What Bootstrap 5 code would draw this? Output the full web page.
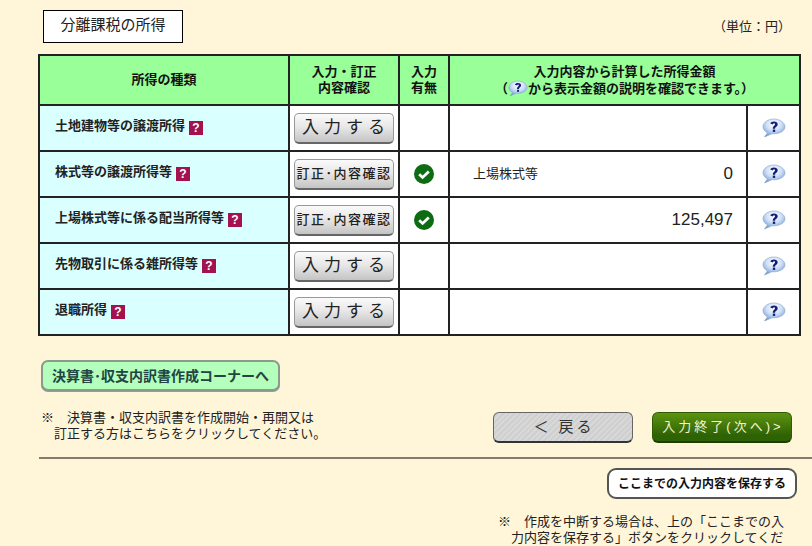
<!DOCTYPE html>
<html lang="ja">
<head>
<meta charset="utf-8">
<title>分離課税の所得</title>
<link href="https://cdn.jsdelivr.net/npm/bootstrap@5.3.0/dist/css/bootstrap.min.css" rel="stylesheet">
<style>
html,body{height:546px;overflow:hidden}
body{background:#fff5d9;color:#222;font-family:"Liberation Sans","Noto Sans CJK JP",sans-serif;font-size:13px;line-height:14px}
.pg{width:812px;height:546px;overflow:hidden}
.topbar{padding:10px 21px 11px 43px}
.ttl{width:140px;height:33px;border:1px solid #000;background:#fff;font-size:15px;color:#222;padding-bottom:3px}
.unit{font-size:13px;margin-bottom:0}
.tblwrap{padding:0 13px 0 38px}
.tx{table-layout:fixed;border-collapse:collapse;width:761px;margin:0;background:#fff}
.tx td,.tx th{border:2px solid #222;padding:0;vertical-align:middle;font-size:13px}
.tx th{background:#99ff99;text-align:center;height:50px;font-weight:700;line-height:16px;color:#111}
.tx tbody td{height:46px}
.tx td.nm{background:#d9ffff;font-weight:700;padding-left:15px;color:#222;padding-bottom:2px}
.tx td.ct{text-align:center}
.tx td.amt{padding:0 13px 0 23px;font-size:17px;color:#222}
.amt small{font-size:13px}
.qm{display:inline-flex;width:14px;height:14px;background:#a3124f;color:#fff;font:700 12px/14px "Liberation Sans",sans-serif;margin-left:4px;vertical-align:-2px;align-items:center;justify-content:center}
.gbtn{width:100px;height:31px;padding:0;border:1px solid #999;border-bottom:2px solid #666;border-radius:5px;background:linear-gradient(#fafafa,#e8e8e8 45%,#c4c4c4);color:#222;display:inline-flex;align-items:center;justify-content:center;white-space:nowrap}
.g1{font-size:17px;letter-spacing:5px;padding-left:4px}
.g2{font-size:13px;letter-spacing:1.5px;font-weight:500}
.lower{padding:24px 15px 0 41px}
.cornerbtn{width:239px;height:31px;border:2px solid #8a9a8f;border-radius:7px;background:#b3ffbb;font-weight:700;font-size:14px;color:#244;padding:0;box-shadow:0 1px 0 #999}
.note{margin:19px 0 0;font-size:13px;line-height:16px;width:300px;padding-left:13px;text-indent:-13px;white-space:nowrap}
.acts{padding-top:52px;gap:19px;margin-right:5px}
.back{width:140px;height:31px;border:1px solid #666;border-bottom:2px solid #333;border-radius:6px;background:repeating-linear-gradient(135deg,#d8d8d8 0 2px,#cfcfcf 2px 4px);font-size:15px;color:#333;letter-spacing:3px;padding:0 0 0 2px;white-space:nowrap}
.next{width:140px;height:31px;border:1px solid #2e5c05;border-bottom:2px solid #1f3d02;border-radius:6px;background:linear-gradient(#5d9410,#2f6205 80%);color:#eef5d8;font-size:13px;letter-spacing:3px;padding:0 0 0 2px;white-space:nowrap}
.rule{height:2px;background:#857a6c;margin:14px 0 0 39px;width:773px;border:0;opacity:1}
.savebtn{width:190px;height:31px;background:#fff;border:2px solid #555;border-radius:9px;font-weight:700;font-size:12px;color:#111;padding:0;margin:9px 15px 0 0}
.note2{width:288px;margin:15px 26px 0 auto;font-size:13px;line-height:16px;padding-left:13px;text-indent:-13px;color:#222}
</style>
</head>
<body>
<div class="pg">
  <div class="topbar d-flex justify-content-between align-items-center">
    <div class="ttl d-flex align-items-center justify-content-center">分離課税の所得</div>
    <div class="unit">（単位：円）</div>
  </div>
  <div class="tblwrap">
    <table class="tx">
      <colgroup><col style="width:250px"><col style="width:110px"><col style="width:50px"><col style="width:298px"><col style="width:53px"></colgroup>
      <thead>
        <tr><th>所得の種類</th><th>入力・訂正<br>内容確認</th><th>入力<br>有無</th>
          <th colspan="2">入力内容から計算した所得金額<br>（<svg width="20" height="17" viewBox="0 0 24 20" style="vertical-align:-4px"><use href="#bub"/></svg>から表示金額の説明を確認できます。）</th></tr>
      </thead>
      <tbody>
        <tr><td class="nm">土地建物等の譲渡所得<span class="qm">?</span></td><td class="ct"><button class="gbtn g1">入力する</button></td><td></td><td></td>
          <td class="ct"><svg width="24" height="20" viewBox="0 0 24 20"><use href="#bub"/></svg></td></tr>
        <tr><td class="nm">株式等の譲渡所得等<span class="qm">?</span></td><td class="ct"><button class="gbtn g2">訂正･内容確認</button></td>
          <td class="ct"><svg width="20" height="20" viewBox="0 0 20 20"><use href="#chk"/></svg></td>
          <td class="amt"><div class="d-flex justify-content-between align-items-center"><small>上場株式等</small><span>0</span></div></td>
          <td class="ct"><svg width="24" height="20" viewBox="0 0 24 20"><use href="#bub"/></svg></td></tr>
        <tr><td class="nm">上場株式等に係る配当所得等<span class="qm">?</span></td><td class="ct"><button class="gbtn g2">訂正･内容確認</button></td>
          <td class="ct"><svg width="20" height="20" viewBox="0 0 20 20"><use href="#chk"/></svg></td>
          <td class="amt text-end">125,497</td>
          <td class="ct"><svg width="24" height="20" viewBox="0 0 24 20"><use href="#bub"/></svg></td></tr>
        <tr><td class="nm">先物取引に係る雑所得等<span class="qm">?</span></td><td class="ct"><button class="gbtn g1">入力する</button></td><td></td><td></td>
          <td class="ct"><svg width="24" height="20" viewBox="0 0 24 20"><use href="#bub"/></svg></td></tr>
        <tr><td class="nm">退職所得<span class="qm">?</span></td><td class="ct"><button class="gbtn g1">入力する</button></td><td></td><td></td>
          <td class="ct"><svg width="24" height="20" viewBox="0 0 24 20"><use href="#bub"/></svg></td></tr>
      </tbody>
    </table>
  </div>
  <div class="lower d-flex justify-content-between align-items-start">
    <div>
      <button class="cornerbtn">決算書･収支内訳書作成コーナーへ</button>
      <p class="note">※　決算書・収支内訳書を作成開始・再開又は<br>訂正する方はこちらをクリックしてください。</p>
    </div>
    <div class="acts d-flex">
      <button class="back">＜ 戻る</button>
      <button class="next">入力終了(次へ)&gt;</button>
    </div>
  </div>
  <hr class="rule">
  <div class="d-flex justify-content-end"><button class="savebtn">ここまでの入力内容を保存する</button></div>
  <p class="note2">※　作成を中断する場合は、上の「ここまでの入力内容を保存する」ボタンをクリックしてください。</p>
</div>
<svg width="0" height="0" class="d-block" aria-hidden="true">
  <defs>
    <radialGradient id="bg" cx=".5" cy=".3" r=".75"><stop offset="0" stop-color="#fff"/><stop offset=".45" stop-color="#cfe0f8"/><stop offset="1" stop-color="#5f8fd0"/></radialGradient>
    <g id="bub"><path d="M12 1C6 1 1 4.500 1 8.800c0 2.600 1.800 4.700 4.500 6L2.500 19l7.500-3.300c.7.1 1.300.1 2 .1 6 0 11-3.100 11-7S18 1 12 1z" fill="url(#bg)" stroke="#8aa3c0" stroke-width=".6"/><path d="M8.300 5.500C8.800 2.800 15.700 2.500 15.700 6.200c0 2.400-2.600 2.600-2.600 4.500h-2.300c0-2.800 2.200-3 2.200-4.500 0-1.500-1.700-1.400-2.100.3z" fill="#101c78"/><rect x="10.800" y="11.600" width="2.400" height="2.300" fill="#101c78"/></g>
    <g id="chk"><circle cx="10" cy="10" r="10" fill="#0d6b12"/><path d="M5.200 10.200 8.600 13.400 14.800 7.400" fill="none" stroke="#fff" stroke-width="2.800"/></g>
  </defs>
</svg>
<script src="https://cdn.jsdelivr.net/npm/bootstrap@5.3.0/dist/js/bootstrap.bundle.min.js"></script>
</body>
</html>
